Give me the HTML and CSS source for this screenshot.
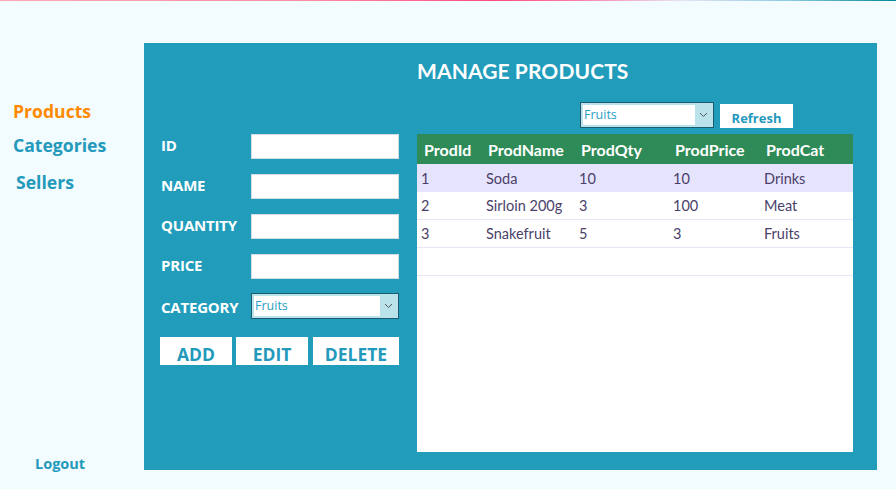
FILE: index.html
```html
<!DOCTYPE html>
<html>
<head>
<meta charset="utf-8">
<link rel="stylesheet" href="styles.css">
</head>
<body>
<div class="topline"></div>
<div class="page">
  <nav class="sidebar">
    <div class="nav-links">
      <a class="nav nav-active">Products</a>
      <a class="nav nav-cat">Categories</a>
      <a class="nav nav-sell">Sellers</a>
    </div>
    <a class="logout">Logout</a>
  </nav>
  <main class="panel">
    <section class="form-col">
      <div class="row"><span class="label">ID</span><div class="input"></div></div>
      <div class="row"><span class="label">NAME</span><div class="input"></div></div>
      <div class="row"><span class="label">QUANTITY</span><div class="input"></div></div>
      <div class="row"><span class="label">PRICE</span><div class="input"></div></div>
      <div class="row row-cat"><span class="label">CATEGORY</span>
        <div class="combo combo-form"><span class="combo-text">Fruits</span><span class="combo-arrow"><svg width="9" height="6" viewBox="0 0 9 6"><path d="M1 1 L4.5 4.5 L8 1" fill="none" stroke="#555" stroke-width="1"/></svg></span></div>
      </div>
      <div class="buttons">
        <button class="btn btn-add">ADD</button>
        <button class="btn btn-edit">EDIT</button>
        <button class="btn btn-del">DELETE</button>
      </div>
    </section>
    <section class="table-col">
      <h1 class="title">MANAGE PRODUCTS</h1>
      <div class="toolbar">
        <div class="combo combo-filter"><span class="combo-text">Fruits</span><span class="combo-arrow"><svg width="9" height="6" viewBox="0 0 9 6"><path d="M1 1 L4.5 4.5 L8 1" fill="none" stroke="#555" stroke-width="1"/></svg></span></div>
        <button class="refresh">Refresh</button>
      </div>
      <div class="grid">
        <div class="grid-row grid-head">
          <span class="c1">ProdId</span><span class="c2">ProdName</span><span class="c3">ProdQty</span><span class="c4">ProdPrice</span><span class="c5">ProdCat</span>
        </div>
        <div class="grid-row grid-sel">
          <span class="c1">1</span><span class="c2">Soda</span><span class="c3">10</span><span class="c4">10</span><span class="c5">Drinks</span>
        </div>
        <div class="grid-row">
          <span class="c1">2</span><span class="c2">Sirloin 200g</span><span class="c3">3</span><span class="c4">100</span><span class="c5">Meat</span>
        </div>
        <div class="grid-row">
          <span class="c1">3</span><span class="c2">Snakefruit</span><span class="c3">5</span><span class="c4">3</span><span class="c5">Fruits</span>
        </div>
        <div class="grid-row grid-empty"></div>
      </div>
    </section>
  </main>
</div>
</body>
</html>
```

FILE: styles.css
```css
* { box-sizing: border-box; }
html, body { margin: 0; padding: 0; }
body {
  width: 896px;
  height: 489px;
  background: #f2fbfe;
  font-family: "Open Sans", "Noto Sans", sans-serif;
  overflow: hidden;
}
.topline {
  height: 1px;
  background: linear-gradient(90deg, #ffa8b6 0%, #ff8aa2 35%, #ff4a7e 55%, #ff7aa6 64%, #e6e2f2 76%, #8ccbe2 88%, #00879a 100%);
}
.page {
  display: flex;
  height: 488px;
}
.sidebar {
  width: 144px;
  display: flex;
  flex-direction: column;
  justify-content: space-between;
  padding: 98px 0 16px 0;
}
.nav-links { display: flex; flex-direction: column; }
.nav {
  font-weight: 700;
  font-size: 17.6px;
  line-height: 24px;
  color: #2399bb;
  padding-left: 13px;
}
.nav-active { color: #ff8a00; }
.nav-cat { margin-top: 10px; }
.nav-sell { margin-top: 13px; padding-left: 16px; }
.logout {
  font-weight: 700;
  font-size: 14.5px;
  color: #2399bb;
  padding-left: 35px;
}
.panel {
  margin-top: 42px;
  width: 733px;
  height: 427px;
  background: #219dbb;
  display: flex;
  padding: 0 24px 18px 16px;
  gap: 18px;
}
.form-col {
  width: 239px;
  padding-top: 91px;
  display: flex;
  flex-direction: column;
}
.row {
  display: flex;
  align-items: center;
  height: 25px;
  margin-bottom: 15px;
}
.row:nth-child(4) { margin-bottom: 13px; }
.row-cat { height: 26px; padding-top: 1px; }
.label {
  width: 91px;
  padding-left: 1px;
  padding-bottom: 3px;
  color: #fff;
  font-weight: 700;
  font-size: 15px;
  letter-spacing: -0.2px;
}
.row-cat .label { padding-top: 3px; padding-bottom: 0; }
.input {
  width: 148px;
  height: 25px;
  background: #fff;
  border: 1px solid #d2dde2;
}
.combo {
  display: flex;
  border: 1px solid #1d5c6e;
  background: #b9e2eb;
  padding: 2px;
}
.combo-form { width: 148px; height: 26px; }
.combo-text {
  flex: 1;
  background: #fff;
  color: #2aa0c4;
  font-size: 12.5px;
  line-height: 20px;
  padding-left: 1px;
}
.combo-arrow {
  width: 16px;
  display: flex;
  align-items: center;
  justify-content: center;
}
.buttons {
  display: flex;
  margin-top: 4px;
}
.btn {
  height: 28px;
  background: #fff;
  border: none;
  font-family: "Open Sans", "Noto Sans", sans-serif;
  font-weight: 700;
  font-size: 17.5px;
  color: #2399bb;
  padding: 5px 0 0 0;
  line-height: 24px;
}
.btn-add { width: 72px; }
.btn-edit { width: 72px; margin-left: 4px; }
.btn-del { width: 86px; margin-left: 5px; }
.table-col {
  width: 436px;
  display: flex;
  flex-direction: column;
}
.title {
  margin: 14px 0 0 0;
  font-family: "Lato", "Open Sans", sans-serif;
  font-size: 21px;
  line-height: 28px;
  font-weight: 700;
  color: #fff;
  letter-spacing: 0.1px;
}
.toolbar {
  display: flex;
  align-items: flex-start;
  margin-top: 17px;
  padding-left: 163px;
  height: 32px;
}
.combo-filter { width: 134px; height: 26px; }
.refresh {
  margin-left: 6px;
  margin-top: 2px;
  width: 73px;
  height: 24px;
  border: none;
  background: #fff;
  color: #2399bb;
  font-family: "Open Sans", "Noto Sans", sans-serif;
  font-weight: 700;
  font-size: 13px;
  padding: 4px 0 0 0;
}
.grid {
  flex: 1;
  background: #fff;
}
.grid-row {
  display: flex;
  height: 28px;
  align-items: center;
  border-bottom: 1px solid #e6e6f6;
  font-size: 14.5px;
  color: #4a3f6a;
  font-family: "Lato", "Open Sans", sans-serif;
}
.grid-head {
  height: 30px;
  background: #2e8b57;
  color: #fff;
  font-weight: 700;
  font-size: 16px;
  border-bottom: none;
}
.grid-sel { background: #e6e3fc; border-bottom: none; }
.c1 { width: 69px; padding-left: 4px; }
.c2 { width: 93px; }
.c3 { width: 94px; }
.c4 { width: 91px; }
.c5 { flex: 1; }
.grid-head .c1 { padding-left: 7px; width: 71px; }
.grid-head .c2 { width: 93px; }
.grid-head .c3 { width: 94px; }
.grid-head .c4 { width: 91px; }
```
